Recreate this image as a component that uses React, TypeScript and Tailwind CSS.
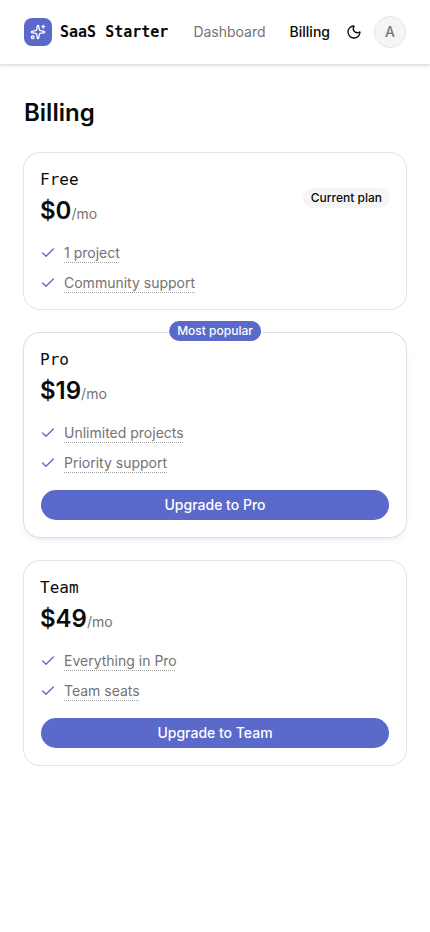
import { useState } from 'react';
import { Check, Moon, Sparkles, Sun } from 'lucide-react';

type Plan = {
  id: string;
  name: string;
  price: number;
  features: string[];
  popular?: boolean;
};

const PLANS: Plan[] = [
  { id: 'free', name: 'Free', price: 0, features: ['1 project', 'Community support'] },
  { id: 'pro', name: 'Pro', price: 19, features: ['Unlimited projects', 'Priority support'], popular: true },
  { id: 'team', name: 'Team', price: 49, features: ['Everything in Pro', 'Team seats'] },
];

const CURRENT_PLAN = 'free';

const Header = () => {
  const [dark, setDark] = useState(false);

  return (
    <header className="border-b border-neutral-200 bg-white shadow-sm">
      <div className="flex h-16 items-center px-6">
        <a href="#" className="flex items-center gap-2 whitespace-nowrap">
          <span className="flex size-7 items-center justify-center rounded-lg bg-[#5b69ca] text-white">
            <Sparkles className="size-4" />
          </span>
          <span className="font-['DejaVu_Sans_Mono',monospace] text-[15px] font-bold">SaaS Starter</span>
        </a>
        <div className="ml-auto flex items-center gap-2">
          <nav className="flex items-center gap-6 text-sm">
            <a href="#dashboard" className="text-neutral-500">Dashboard</a>
            <a href="#billing" className="font-medium">Billing</a>
          </nav>
          <div className="flex items-center gap-1">
            <button
              aria-label="Toggle theme"
              className="flex size-8 items-center justify-center rounded-full cursor-pointer"
              onClick={() => setDark(!dark)}
            >
              {dark ? <Sun className="size-4" /> : <Moon className="size-4" />}
            </button>
            <button className="size-8 rounded-full border border-neutral-200 bg-neutral-100 text-sm font-medium text-neutral-500 cursor-pointer">
              A
            </button>
          </div>
        </div>
      </div>
    </header>
  );
};

const PlanCard = ({ plan }: { plan: Plan }) => {
  const current = plan.id === CURRENT_PLAN;

  return (
    <section
      className={`relative flex flex-col gap-4 rounded-2xl bg-white p-4 ring-1 ${
        plan.popular ? 'ring-[#dedee6] shadow-md shadow-[#5b69ca]/10' : 'ring-neutral-200'
      }`}
    >
      {plan.popular && (
        <span className="absolute -top-3 left-1/2 flex h-5 -translate-x-1/2 items-center rounded-full bg-[#5b69ca] px-2 text-xs font-medium whitespace-nowrap text-white">
          Most popular
        </span>
      )}
      <div className="flex items-center justify-between">
        <div className="flex flex-col gap-1">
          <h2 className="font-['DejaVu_Sans_Mono',monospace] text-base leading-[22px]">{plan.name}</h2>
          <p className="text-2xl font-semibold">
            ${plan.price}
            <span className="text-sm font-normal text-neutral-500">/mo</span>
          </p>
        </div>
        {current && (
          <span className="flex h-5 items-center rounded-full bg-neutral-100 px-2 text-xs font-medium">
            Current plan
          </span>
        )}
      </div>
      <ul className="flex flex-col gap-2.5 text-sm text-neutral-500">
        {plan.features.map((feature) => (
          <li key={feature} className="flex items-center gap-2">
            <Check className="size-4 text-[#5b69ca]" />
            <span className="underline decoration-neutral-400 decoration-dotted decoration-1 underline-offset-4">
              {feature}
            </span>
          </li>
        ))}
      </ul>
      {!current && (
        <button className="h-8 w-full rounded-full border border-transparent bg-[#5b69ca] bg-clip-padding text-sm font-medium text-white cursor-pointer">
          Upgrade to {plan.name}
        </button>
      )}
    </section>
  );
};

const App = () => {
  return (
    <div className="min-h-screen bg-white font-['Inter',sans-serif] text-neutral-950">
      <Header />
      <main className="flex flex-col gap-6 px-6 py-8">
        <h1 className="text-2xl font-semibold">Billing</h1>
        {PLANS.map((plan) => (
          <PlanCard key={plan.id} plan={plan} />
        ))}
      </main>
    </div>
  );
};

export default App;
